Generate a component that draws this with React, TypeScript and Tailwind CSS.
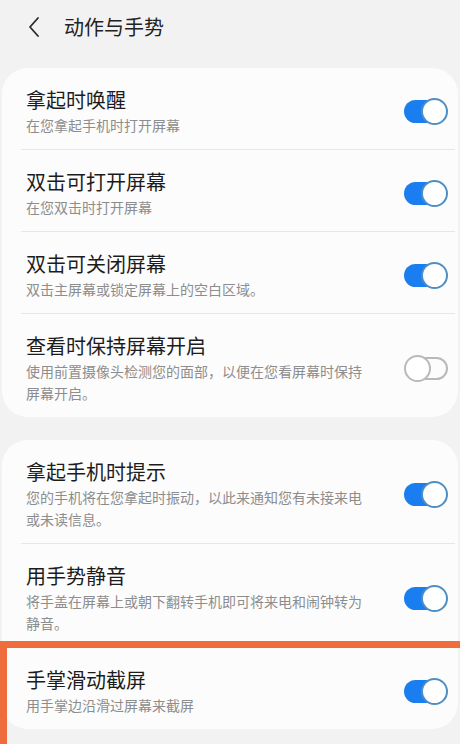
import React from "react";

type Item = { title: string; sub: string; on: boolean };

const group1: Item[] = [
  { title: "拿起时唤醒", sub: "在您拿起手机时打开屏幕", on: true },
  { title: "双击可打开屏幕", sub: "在您双击时打开屏幕", on: true },
  { title: "双击可关闭屏幕", sub: "双击主屏幕或锁定屏幕上的空白区域。", on: true },
  {
    title: "查看时保持屏幕开启",
    sub: "使用前置摄像头检测您的面部，以便在您看屏幕时保持屏幕开启。",
    on: false,
  },
];

const group2: Item[] = [
  { title: "拿起手机时提示", sub: "您的手机将在您拿起时振动，以此来通知您有未接来电或未读信息。", on: true },
  { title: "用手势静音", sub: "将手盖在屏幕上或朝下翻转手机即可将来电和闹钟转为静音。", on: true },
];

function Toggle({ on }: { on: boolean }) {
  if (on) {
    return (
      <div className="relative w-[44px] h-[27px] shrink-0">
        <div className="absolute left-0 top-[2px] w-[40px] h-[23px] rounded-full bg-[#1a7ef0]" />
        <div className="absolute right-0 top-0 w-[27px] h-[27px] rounded-full bg-white border-[2px] border-[#4d8fc4]" />
      </div>
    );
  }
  return (
    <div className="relative w-[44px] h-[27px] shrink-0">
      <div className="absolute right-0 top-[2px] w-[40px] h-[23px] rounded-full border-[2px] border-[#b9b9b9]" />
      <div className="absolute left-0 top-0 w-[27px] h-[27px] rounded-full bg-white border-[2px] border-[#b9b9b9]" />
    </div>
  );
}

function Row({ item }: { item: Item }) {
  return (
    <div className="flex items-center pl-[24px] pr-[10px] pt-[18px] pb-[13px]">
      <div className="flex-1 pr-[30px]">
        <div className="text-[20px] leading-[28px] text-[#1c1c1c]">{item.title}</div>
        <div className="text-[14px] leading-[22px] text-[#8d8d8d]">{item.sub}</div>
      </div>
      <Toggle on={item.on} />
    </div>
  );
}

function Divider() {
  return <div className="h-px bg-[#e7e7e7] ml-[19px] mr-[3px]" />;
}

export default function App() {
  return (
    <div
      className="relative w-[460px] h-[744px] overflow-hidden bg-[#f2f2f2]"
      style={{ fontFamily: '"Noto Sans CJK SC", "Noto Sans", sans-serif' }}
    >
      <div className="flex items-center h-[54px] pl-[26px]">
        <svg width="16" height="22" viewBox="0 0 16 22" className="shrink-0">
          <path d="M12 2 L4 11 L12 20" fill="none" stroke="#2a2a2a" strokeWidth="1.8" strokeLinecap="round" strokeLinejoin="round" />
        </svg>
        <div className="ml-[22px] text-[20px] text-[#222]">动作与手势</div>
      </div>

      <div className="mt-[14px] mx-[2px] rounded-[26px] bg-[#fcfcfc]">
        {group1.map((it, i) => (
          <div key={i}>
            {i > 0 && <Divider />}
            <Row item={it} />
          </div>
        ))}
      </div>

      <div className="mt-[23px] mx-[2px] rounded-[26px] bg-[#fcfcfc]">
        {group2.map((it, i) => (
          <div key={i}>
            {i > 0 && <Divider />}
            <Row item={it} />
          </div>
        ))}
        <Divider />
        <Row item={{ title: "手掌滑动截屏", sub: "用手掌边沿滑过屏幕来截屏", on: true }} />
      </div>

      <div className="absolute left-0 top-[641px] right-[-10px] h-[120px] border-[7px] border-[#ef6d3d]" />
    </div>
  );
}
